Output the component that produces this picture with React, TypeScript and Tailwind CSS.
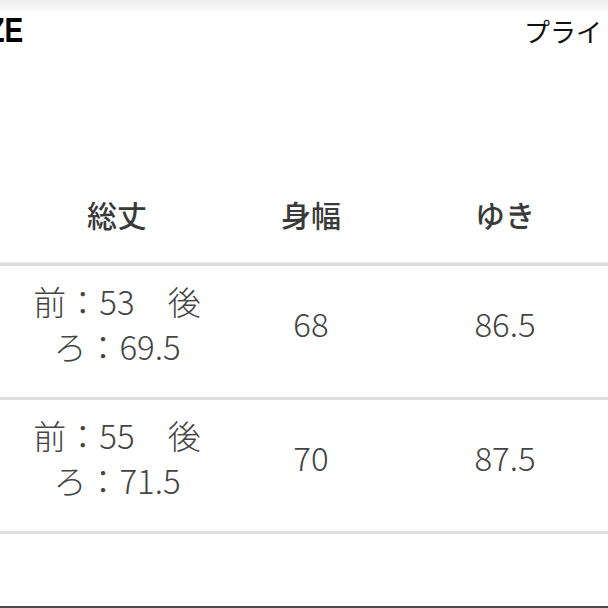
import React from 'react';

const rows = [
  { length: ['前：53　後', 'ろ：69.5'], width: '68', sleeve: '86.5' },
  { length: ['前：55　後', 'ろ：71.5'], width: '70', sleeve: '87.5' },
];

export default function App() {
  return (
    <div
      className="w-[608px] h-[608px] overflow-hidden bg-white flex flex-col"
      style={{ fontFamily: '"Noto Sans CJK JP", "Noto Sans", sans-serif' }}
    >
      {/* Top bar, cropped */}
      <div className="h-[170px] shrink-0 bg-gradient-to-b from-[#eeeeee] via-white via-[8%] to-white">
        <div className="flex justify-between items-start pt-[11px]">
          <span
            className="-ml-[39px] text-[28px] leading-[40px] font-bold text-black scale-y-125"
            style={{ fontFamily: '"Liberation Sans", Arial, sans-serif' }}
          >
            SIZE
          </span>
          <span className="mt-[4px] pr-[6px] whitespace-nowrap text-[26px] leading-[32px] text-[#111]">
            プライ
          </span>
        </div>
      </div>

      {/* Size table */}
      <div className="pl-[20px]">
        <div className="grid grid-cols-[194px_194px_194px] h-[92px] items-center pb-[3px] text-[30px] font-medium text-[#3a3a3a]">
          <div className="text-center">総丈</div>
          <div className="text-center">身幅</div>
          <div className="text-center">ゆき</div>
        </div>
      </div>
      <div className="h-[4px] bg-[#dddddd] border-t border-[#eeeeee]" />

      {rows.map((row, i) => (
        <React.Fragment key={i}>
          <div className="pl-[20px]">
            <div className="grid grid-cols-[194px_194px_194px] h-[131px] items-center pb-[15px] text-[33px] font-light text-[#444]">
              <div className="text-center leading-[45px]">
                <div>{row.length[0]}</div>
                <div>{row.length[1]}</div>
              </div>
              <div className="text-center">{row.width}</div>
              <div className="text-center">{row.sleeve}</div>
            </div>
          </div>
          <div className="h-[3px] bg-[#dedede]" />
        </React.Fragment>
      ))}

      <div className="flex-1" />
      <div className="h-[2px] bg-[#4a4a4a]" />
    </div>
  );
}
